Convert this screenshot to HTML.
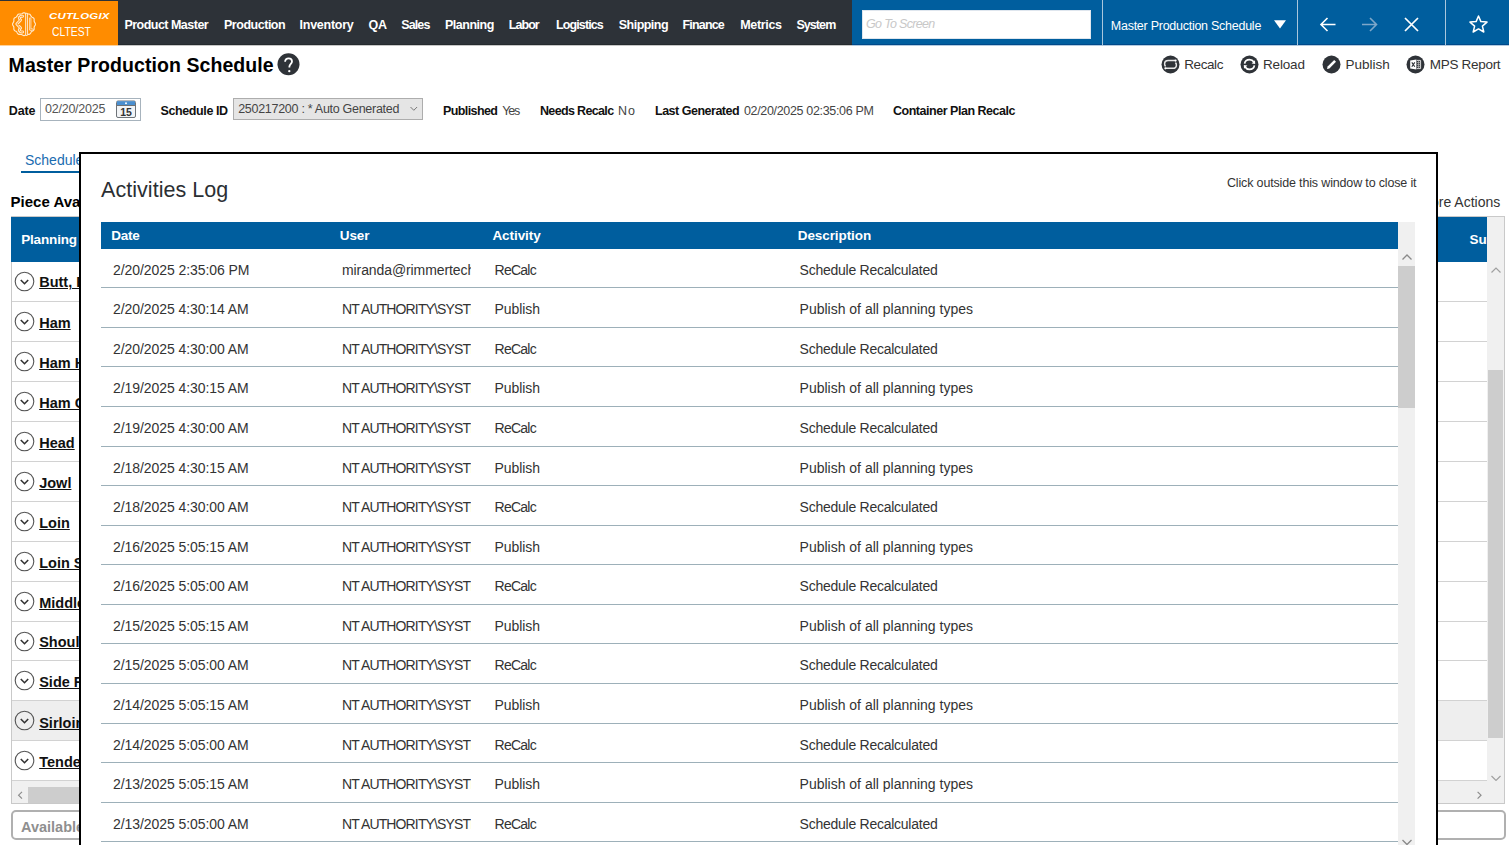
<!DOCTYPE html><html><head><meta charset="utf-8"><style>
html,body{margin:0;padding:0;width:1509px;height:845px;overflow:hidden;background:#fff;font-family:"Liberation Sans",sans-serif}
.t{position:absolute;white-space:nowrap;line-height:1}
.abs{position:absolute}
</style></head><body>
<div style="position:absolute;left:0px;top:0px;width:1509px;height:45px;background:#2d3238"></div>
<div style="position:absolute;left:852px;top:0px;width:657px;height:45px;background:#005e9e"></div>
<div style="position:absolute;left:0px;top:44px;width:852px;height:1px;background:#252a2e"></div>
<div style="position:absolute;left:852px;top:44px;width:657px;height:1px;background:#00498a"></div>
<div style="position:absolute;left:118px;top:45px;width:734px;height:1px;background:rgba(0,0,0,0.22)"></div>
<div style="position:absolute;left:0px;top:1px;width:118px;height:44px;background:#ff8c00"></div>
<div style="position:absolute;left:0px;top:45px;width:118px;height:1px;background:rgba(255,140,0,0.4)"></div>
<div style="position:absolute;left:852px;top:45px;width:657px;height:1px;background:rgba(0,80,150,0.3)"></div>
<div class="t" style="left:124.40px;top:19.30px;font-size:12.5px;letter-spacing:-0.515px;font-weight:700;color:#ffffff;">Product Master</div>
<div class="t" style="left:224.00px;top:19.30px;font-size:12.5px;letter-spacing:-0.478px;font-weight:700;color:#ffffff;">Production</div>
<div class="t" style="left:299.60px;top:19.30px;font-size:12.5px;letter-spacing:-0.262px;font-weight:700;color:#ffffff;">Inventory</div>
<div class="t" style="left:368.40px;top:19.30px;font-size:12.5px;letter-spacing:-0.100px;font-weight:700;color:#ffffff;">QA</div>
<div class="t" style="left:401.20px;top:19.30px;font-size:12.5px;letter-spacing:-0.875px;font-weight:700;color:#ffffff;">Sales</div>
<div class="t" style="left:445.00px;top:19.30px;font-size:12.5px;letter-spacing:-0.486px;font-weight:700;color:#ffffff;">Planning</div>
<div class="t" style="left:508.80px;top:19.30px;font-size:12.5px;letter-spacing:-0.950px;font-weight:700;color:#ffffff;">Labor</div>
<div class="t" style="left:556.00px;top:19.30px;font-size:12.5px;letter-spacing:-0.888px;font-weight:700;color:#ffffff;">Logistics</div>
<div class="t" style="left:618.80px;top:19.30px;font-size:12.5px;letter-spacing:-0.529px;font-weight:700;color:#ffffff;">Shipping</div>
<div class="t" style="left:682.40px;top:19.30px;font-size:12.5px;letter-spacing:-0.800px;font-weight:700;color:#ffffff;">Finance</div>
<div class="t" style="left:740.20px;top:19.30px;font-size:12.5px;letter-spacing:-0.317px;font-weight:700;color:#ffffff;">Metrics</div>
<div class="t" style="left:796.40px;top:19.30px;font-size:12.5px;letter-spacing:-0.920px;font-weight:700;color:#ffffff;">System</div>
<svg class="abs" style="left:0;top:0" width="48" height="48" viewBox="0 0 48 48" fill="none" stroke-linejoin="round" stroke-linecap="round">
<path d="M24.00 12.75 L24.74 12.91 L25.44 13.29 L26.08 13.72 L26.73 14.01 L27.43 14.09 L28.21 14.04 L29.01 14.05 L29.72 14.28 L30.29 14.79 L30.70 15.47 L31.04 16.17 L31.46 16.74 L32.03 17.16 L32.73 17.50 L33.41 17.91 L33.92 18.47 L34.15 19.19 L34.16 19.99 L34.11 20.77 L34.19 21.47 L34.48 22.12 L34.91 22.76 L35.29 23.46 L35.45 24.20 L35.29 24.94 L34.91 25.64 L34.48 26.28 L34.19 26.93 L34.11 27.63 L34.16 28.41 L34.15 29.21 L33.92 29.92 L33.41 30.49 L32.73 30.90 L32.03 31.24 L31.46 31.66 L31.04 32.23 L30.70 32.93 L30.29 33.61 L29.72 34.12 L29.01 34.35 L28.21 34.36 L27.43 34.31 L26.73 34.39 L26.08 34.68 L25.44 35.11 L24.74 35.49 L24.00 35.65 L23.26 35.49 L22.56 35.11 L21.92 34.68 L21.27 34.39 L20.57 34.31 L19.79 34.36 L18.99 34.35 L18.28 34.12 L17.71 33.61 L17.30 32.93 L16.96 32.23 L16.54 31.66 L15.97 31.24 L15.27 30.90 L14.59 30.49 L14.08 29.93 L13.85 29.21 L13.84 28.41 L13.89 27.63 L13.81 26.93 L13.52 26.28 L13.09 25.64 L12.71 24.94 L12.55 24.20 L12.71 23.46 L13.09 22.76 L13.52 22.12 L13.81 21.47 L13.89 20.77 L13.84 19.99 L13.85 19.19 L14.08 18.47 L14.59 17.91 L15.27 17.50 L15.97 17.16 L16.54 16.74 L16.96 16.17 L17.30 15.47 L17.71 14.79 L18.27 14.28 L18.99 14.05 L19.79 14.04 L20.57 14.09 L21.27 14.01 L21.92 13.72 L22.56 13.29 L23.26 12.91 Z" stroke="#ffe9cc" stroke-width="1.15"/>
<g stroke="#ffe9cc" stroke-width="2.9"><path d="M22.6 16.2 C19.4 16 18.2 18 20.6 19.9 L16.8 24 L20.6 28.1 C18.2 30 19.4 32.2 22.6 32"/><path d="M26.6 14.2 L26.6 34.6"/><path d="M30.2 18.6 L30.2 29.6 L32.4 29.6" stroke-width="2.3"/></g>
<g stroke="#ff8c00" stroke-width="0.9"><path d="M22.6 16.2 C19.4 16 18.2 18 20.6 19.9 L16.8 24 L20.6 28.1 C18.2 30 19.4 32.2 22.6 32"/><path d="M26.6 14.2 L26.6 34.6"/><path d="M30.2 18.6 L30.2 29.6 L32.4 29.6" stroke-width="0.7"/></g>
</svg>
<div class="t" style="left:49px;top:11.9px;font-size:8.8px;font-weight:700;font-style:italic;color:#fff;letter-spacing:0.2px;transform:scaleX(1.29);transform-origin:0 0">CUTLOGIX</div>
<div class="t" style="left:52px;top:26.2px;font-size:12.6px;color:#fff;transform:scaleX(0.82);transform-origin:0 0">CLTEST</div>
<div style="position:absolute;left:862px;top:10px;width:229px;height:29px;background:#fff;box-sizing:border-box;border:1px solid #dfe6ee"></div>
<div class="t" style="left:866.00px;top:17.70px;font-size:12.5px;letter-spacing:-0.673px;font-style:italic;color:#c8c8c8;">Go To Screen</div>
<div style="position:absolute;left:1102px;top:0px;width:1px;height:45px;background:#a9c6dc"></div>
<div style="position:absolute;left:1297px;top:0px;width:1px;height:45px;background:#a9c6dc"></div>
<div style="position:absolute;left:1445px;top:0px;width:1px;height:45px;background:#a9c6dc"></div>
<div class="t" style="left:1110.80px;top:19.50px;font-size:12.5px;letter-spacing:-0.260px;font-weight:400;color:#ffffff;">Master Production Schedule</div>
<svg class="abs" style="left:1273px;top:19px" width="14" height="11"><path d="M1 1.2 H13 L7 9.6 Z" fill="#fff"/></svg>
<svg class="abs" style="left:1318px;top:15px" width="20" height="19" fill="none" stroke="#fff" stroke-width="1.6"><path d="M3 9.5 H17.5 M9.5 3 L3 9.5 L9.5 16"/></svg>
<svg class="abs" style="left:1360px;top:15px" width="20" height="19" fill="none" stroke="#7ea7c9" stroke-width="1.6"><path d="M2 9.5 H16.5 M10 3 L16.5 9.5 L10 16"/></svg>
<svg class="abs" style="left:1403px;top:16px" width="17" height="17" fill="none" stroke="#fff" stroke-width="1.7"><path d="M2 2 L15 15 M15 2 L2 15"/></svg>
<svg class="abs" style="left:1468px;top:14px" width="21" height="20" fill="none" stroke="#fff" stroke-width="1.5" stroke-linejoin="round"><path d="M10.5 2 L12.9 7.6 L19 8.1 L14.4 12.1 L15.8 18 L10.5 14.9 L5.2 18 L6.6 12.1 L2 8.1 L8.1 7.6 Z"/></svg>
<div class="t" style="left:8.60px;top:56.30px;font-size:19.5px;letter-spacing:0.068px;font-weight:700;color:#000000;">Master Production Schedule</div>
<svg class="abs" style="left:277px;top:53px" width="23" height="23"><circle cx="11.5" cy="11.3" r="11" fill="#2f3338"/><path d="M8.1 8.8 C8.1 6.6 9.6 5.4 11.6 5.4 C13.6 5.4 15 6.6 15 8.4 C15 10.6 12.4 11 12.4 13.6 L12.4 14.6" fill="none" stroke="#fff" stroke-width="1.8"/><circle cx="12.3" cy="18.2" r="1.15" fill="#fff"/></svg>
<svg class="abs" style="left:1161px;top:55px" width="19" height="19"><circle cx="9.5" cy="9.5" r="9" fill="#2f3338"/><path d="M14.5 5.6 H7.2 C4.8 5.6 3.6 7 3.6 9 C3.6 9.9 4 10.8 4.6 11.3 M4.5 13.3 H11.8 C14.2 13.3 15.4 11.9 15.4 9.9 C15.4 9 15 8.2 14.4 7.6" fill="none" stroke="#e6e6e6" stroke-width="1.5"/><circle cx="14.6" cy="5.6" r="1.1" fill="#fff"/><circle cx="4.4" cy="13.3" r="1.1" fill="#fff"/></svg>
<svg class="abs" style="left:1240px;top:55px" width="19" height="19"><circle cx="9.5" cy="9.5" r="9" fill="#2f3338"/><path d="M4.6 8.6 C5 6.1 7 4.6 9.5 4.6 C11.4 4.6 13 5.6 13.8 7 M14.4 10.4 C14 12.9 12 14.4 9.5 14.4 C7.6 14.4 6 13.4 5.2 12" fill="none" stroke="#fff" stroke-width="1.7"/><path d="M15 5.2 L15.2 9 L11.6 8.4 Z M4 13.8 L3.8 10 L7.4 10.6 Z" fill="#fff"/></svg>
<svg class="abs" style="left:1322px;top:55px" width="19" height="19"><circle cx="9.5" cy="9.5" r="9" fill="#2f3338"/><path d="M5 14 L5.6 11.6 L12.2 5 L14 6.8 L7.4 13.4 Z" fill="#fff"/></svg>
<svg class="abs" style="left:1406px;top:55px" width="19" height="19"><circle cx="9.5" cy="9.5" r="9" fill="#2f3338"/><path d="M4.2 5.6 L10.4 4.6 L10.4 14.4 L4.2 13.4 Z" fill="#fff"/><path d="M10.8 5.4 H14.6 V13.6 H10.8" fill="none" stroke="#ddd" stroke-width="1"/><path d="M11 7.6 H14.4 M11 9.6 H14.4 M11 11.6 H14.4 M12.6 5.6 V13.4" stroke="#bbb" stroke-width="0.7"/><path d="M5.8 7.4 L8.8 11.8 M8.8 7.4 L5.8 11.8" stroke="#2f3338" stroke-width="1.1"/></svg>
<div class="t" style="left:1184.20px;top:57.70px;font-size:13.5px;letter-spacing:-0.400px;font-weight:400;color:#333333;">Recalc</div>
<div class="t" style="left:1263.00px;top:57.70px;font-size:13.5px;letter-spacing:-0.160px;font-weight:400;color:#333333;">Reload</div>
<div class="t" style="left:1345.60px;top:57.70px;font-size:13.5px;letter-spacing:0.000px;font-weight:400;color:#333333;">Publish</div>
<div class="t" style="left:1429.80px;top:57.70px;font-size:13.5px;letter-spacing:-0.300px;font-weight:400;color:#333333;">MPS Report</div>
<div class="t" style="left:8.80px;top:104.50px;font-size:12.5px;letter-spacing:-0.167px;font-weight:700;color:#111111;">Date</div>
<div class="t" style="left:160.60px;top:104.50px;font-size:12.5px;letter-spacing:-0.400px;font-weight:700;color:#111111;">Schedule ID</div>
<div class="t" style="left:443.00px;top:104.90px;font-size:12.5px;letter-spacing:-0.600px;font-weight:700;color:#111111;">Published</div>
<div class="t" style="left:502.20px;top:104.90px;font-size:12.5px;letter-spacing:-1.150px;font-weight:400;color:#444444;">Yes</div>
<div class="t" style="left:540.00px;top:104.90px;font-size:12.5px;letter-spacing:-0.655px;font-weight:700;color:#111111;">Needs Recalc</div>
<div class="t" style="left:618.00px;top:104.90px;font-size:12.5px;letter-spacing:0.900px;font-weight:400;color:#444444;">No</div>
<div class="t" style="left:655.00px;top:104.90px;font-size:12.5px;letter-spacing:-0.492px;font-weight:700;color:#111111;">Last Generated</div>
<div class="t" style="left:744.00px;top:104.90px;font-size:12.5px;letter-spacing:-0.338px;font-weight:400;color:#444444;">02/20/2025 02:35:06 PM</div>
<div class="t" style="left:893.00px;top:104.90px;font-size:12.5px;letter-spacing:-0.475px;font-weight:700;color:#111111;">Container Plan Recalc</div>
<div style="position:absolute;left:40px;top:98px;width:101px;height:23px;box-sizing:border-box;border:1px solid #a7b3bd;background:#fff"></div>
<div class="t" style="left:45.00px;top:103.10px;font-size:12.5px;letter-spacing:-0.233px;font-weight:400;color:#555555;">02/20/2025</div>
<svg class="abs" style="left:116px;top:100px" width="20" height="18"><rect x="0.5" y="1" width="19" height="16.5" rx="1.5" fill="#f2f4f6" stroke="#6e7378"/><rect x="1" y="1.2" width="18" height="4" fill="#4a8fd0"/><rect x="1" y="5" width="18" height="0.8" fill="#555"/><circle cx="10" cy="3.2" r="1" fill="#fff"/><text x="10" y="16" font-family="Liberation Sans" font-weight="700" font-size="10.5" text-anchor="middle" fill="#333">15</text></svg>
<div style="position:absolute;left:233px;top:98px;width:190px;height:22px;box-sizing:border-box;border:1px solid #adadad;background:#e5e5e5"></div>
<div class="t" style="left:238.20px;top:103.30px;font-size:12.5px;letter-spacing:-0.285px;font-weight:400;color:#444444;">250217200 : * Auto Generated</div>
<svg class="abs" style="left:409px;top:105px" width="10" height="8" fill="none" stroke="#777" stroke-width="1"><path d="M1.5 2 L4.8 5.3 L8.1 2"/></svg>
<div style="position:absolute;left:0px;top:45px;width:1509px;height:0px;"></div>
<div class="t" style="left:25.00px;top:152.50px;font-size:14px;letter-spacing:0.000px;font-weight:400;color:#1a6cb0;">Schedule</div>
<div style="position:absolute;left:21px;top:171px;width:70px;height:2px;background:#005e9e"></div>
<div class="t" style="left:10.60px;top:194.30px;font-size:15px;letter-spacing:0.000px;font-weight:700;color:#000000;">Piece Availability</div>
<div class="t" style="left:1419.30px;top:194.80px;font-size:14px;letter-spacing:0.000px;font-weight:400;color:#333333;">More Actions</div>
<div style="position:absolute;left:11px;top:216px;width:1494px;height:588px;box-sizing:border-box;border:1px solid #c9c9c9;background:#fff"></div>
<div style="position:absolute;left:11px;top:217px;width:1476px;height:45px;background:#005e9e"></div>
<div class="t" style="left:21.20px;top:233.10px;font-size:13.5px;letter-spacing:-0.160px;font-weight:700;color:#ffffff;">Planning Type</div>
<div class="t" style="left:1469.60px;top:232.90px;font-size:13.5px;letter-spacing:-0.160px;font-weight:700;color:#ffffff;">Sun</div>
<div class="abs" style="left:12px;top:301.30px;width:1475px;height:1px;background:#d2d2d2"></div>
<svg class="abs" style="left:14px;top:271.45px" width="21" height="21"><circle cx="10.5" cy="10.5" r="9.3" fill="none" stroke="#555" stroke-width="1.1"/><path d="M6.8 9 L10.5 12.7 L14.2 9" fill="none" stroke="#333" stroke-width="1.6"/></svg>
<div class="t" style="left:39.20px;top:274.90px;font-size:14.5px;letter-spacing:0.000px;font-weight:700;color:#111111;text-decoration:underline;text-underline-offset:1px;">Butt, Boston</div>
<div class="abs" style="left:12px;top:341.20px;width:1475px;height:1px;background:#d2d2d2"></div>
<svg class="abs" style="left:14px;top:311.35px" width="21" height="21"><circle cx="10.5" cy="10.5" r="9.3" fill="none" stroke="#555" stroke-width="1.1"/><path d="M6.8 9 L10.5 12.7 L14.2 9" fill="none" stroke="#333" stroke-width="1.6"/></svg>
<div class="t" style="left:39.20px;top:315.50px;font-size:14.5px;letter-spacing:0.000px;font-weight:700;color:#111111;text-decoration:underline;text-underline-offset:1px;">Ham</div>
<div class="abs" style="left:12px;top:381.10px;width:1475px;height:1px;background:#d2d2d2"></div>
<svg class="abs" style="left:14px;top:351.25px" width="21" height="21"><circle cx="10.5" cy="10.5" r="9.3" fill="none" stroke="#555" stroke-width="1.1"/><path d="M6.8 9 L10.5 12.7 L14.2 9" fill="none" stroke="#333" stroke-width="1.6"/></svg>
<div class="t" style="left:39.20px;top:356.10px;font-size:14.5px;letter-spacing:0.000px;font-weight:700;color:#111111;text-decoration:underline;text-underline-offset:1px;">Ham Hock</div>
<div class="abs" style="left:12px;top:421.00px;width:1475px;height:1px;background:#d2d2d2"></div>
<svg class="abs" style="left:14px;top:391.15px" width="21" height="21"><circle cx="10.5" cy="10.5" r="9.3" fill="none" stroke="#555" stroke-width="1.1"/><path d="M6.8 9 L10.5 12.7 L14.2 9" fill="none" stroke="#333" stroke-width="1.6"/></svg>
<div class="t" style="left:39.20px;top:395.70px;font-size:14.5px;letter-spacing:0.000px;font-weight:700;color:#111111;text-decoration:underline;text-underline-offset:1px;">Ham Cured</div>
<div class="abs" style="left:12px;top:460.90px;width:1475px;height:1px;background:#d2d2d2"></div>
<svg class="abs" style="left:14px;top:431.05px" width="21" height="21"><circle cx="10.5" cy="10.5" r="9.3" fill="none" stroke="#555" stroke-width="1.1"/><path d="M6.8 9 L10.5 12.7 L14.2 9" fill="none" stroke="#333" stroke-width="1.6"/></svg>
<div class="t" style="left:39.20px;top:436.30px;font-size:14.5px;letter-spacing:0.000px;font-weight:700;color:#111111;text-decoration:underline;text-underline-offset:1px;">Head</div>
<div class="abs" style="left:12px;top:500.80px;width:1475px;height:1px;background:#d2d2d2"></div>
<svg class="abs" style="left:14px;top:470.95px" width="21" height="21"><circle cx="10.5" cy="10.5" r="9.3" fill="none" stroke="#555" stroke-width="1.1"/><path d="M6.8 9 L10.5 12.7 L14.2 9" fill="none" stroke="#333" stroke-width="1.6"/></svg>
<div class="t" style="left:39.20px;top:475.90px;font-size:14.5px;letter-spacing:0.000px;font-weight:700;color:#111111;text-decoration:underline;text-underline-offset:1px;">Jowl</div>
<div class="abs" style="left:12px;top:540.70px;width:1475px;height:1px;background:#d2d2d2"></div>
<svg class="abs" style="left:14px;top:510.85px" width="21" height="21"><circle cx="10.5" cy="10.5" r="9.3" fill="none" stroke="#555" stroke-width="1.1"/><path d="M6.8 9 L10.5 12.7 L14.2 9" fill="none" stroke="#333" stroke-width="1.6"/></svg>
<div class="t" style="left:39.20px;top:515.50px;font-size:14.5px;letter-spacing:0.000px;font-weight:700;color:#111111;text-decoration:underline;text-underline-offset:1px;">Loin</div>
<div class="abs" style="left:12px;top:580.60px;width:1475px;height:1px;background:#d2d2d2"></div>
<svg class="abs" style="left:14px;top:550.75px" width="21" height="21"><circle cx="10.5" cy="10.5" r="9.3" fill="none" stroke="#555" stroke-width="1.1"/><path d="M6.8 9 L10.5 12.7 L14.2 9" fill="none" stroke="#333" stroke-width="1.6"/></svg>
<div class="t" style="left:39.20px;top:556.10px;font-size:14.5px;letter-spacing:0.000px;font-weight:700;color:#111111;text-decoration:underline;text-underline-offset:1px;">Loin Sirloin</div>
<div class="abs" style="left:12px;top:620.50px;width:1475px;height:1px;background:#d2d2d2"></div>
<svg class="abs" style="left:14px;top:590.65px" width="21" height="21"><circle cx="10.5" cy="10.5" r="9.3" fill="none" stroke="#555" stroke-width="1.1"/><path d="M6.8 9 L10.5 12.7 L14.2 9" fill="none" stroke="#333" stroke-width="1.6"/></svg>
<div class="t" style="left:39.20px;top:595.70px;font-size:14.5px;letter-spacing:0.000px;font-weight:700;color:#111111;text-decoration:underline;text-underline-offset:1px;">Middle</div>
<div class="abs" style="left:12px;top:660.40px;width:1475px;height:1px;background:#d2d2d2"></div>
<svg class="abs" style="left:14px;top:630.55px" width="21" height="21"><circle cx="10.5" cy="10.5" r="9.3" fill="none" stroke="#555" stroke-width="1.1"/><path d="M6.8 9 L10.5 12.7 L14.2 9" fill="none" stroke="#333" stroke-width="1.6"/></svg>
<div class="t" style="left:39.20px;top:635.30px;font-size:14.5px;letter-spacing:0.000px;font-weight:700;color:#111111;text-decoration:underline;text-underline-offset:1px;">Shoulder</div>
<div class="abs" style="left:12px;top:700.30px;width:1475px;height:1px;background:#d2d2d2"></div>
<svg class="abs" style="left:14px;top:670.45px" width="21" height="21"><circle cx="10.5" cy="10.5" r="9.3" fill="none" stroke="#555" stroke-width="1.1"/><path d="M6.8 9 L10.5 12.7 L14.2 9" fill="none" stroke="#333" stroke-width="1.6"/></svg>
<div class="t" style="left:39.20px;top:674.90px;font-size:14.5px;letter-spacing:0.000px;font-weight:700;color:#111111;text-decoration:underline;text-underline-offset:1px;">Side Rib</div>
<div class="abs" style="left:12px;top:700.90px;width:1475px;height:39.9px;background:#eeeeee"></div>
<div class="abs" style="left:12px;top:740.20px;width:1475px;height:1px;background:#d2d2d2"></div>
<svg class="abs" style="left:14px;top:710.35px" width="21" height="21"><circle cx="10.5" cy="10.5" r="9.3" fill="none" stroke="#555" stroke-width="1.1"/><path d="M6.8 9 L10.5 12.7 L14.2 9" fill="none" stroke="#333" stroke-width="1.6"/></svg>
<div class="t" style="left:39.20px;top:715.50px;font-size:14.5px;letter-spacing:0.000px;font-weight:700;color:#111111;text-decoration:underline;text-underline-offset:1px;">Sirloin</div>
<div class="abs" style="left:12px;top:780.10px;width:1475px;height:1px;background:#d2d2d2"></div>
<svg class="abs" style="left:14px;top:750.25px" width="21" height="21"><circle cx="10.5" cy="10.5" r="9.3" fill="none" stroke="#555" stroke-width="1.1"/><path d="M6.8 9 L10.5 12.7 L14.2 9" fill="none" stroke="#333" stroke-width="1.6"/></svg>
<div class="t" style="left:39.20px;top:755.10px;font-size:14.5px;letter-spacing:0.000px;font-weight:700;color:#111111;text-decoration:underline;text-underline-offset:1px;">Tenderloin</div>
<div style="position:absolute;left:1487px;top:217px;width:17px;height:564px;background:#f0f0f0"></div>
<div style="position:absolute;left:1488px;top:370px;width:15px;height:368px;background:#cdcdcd"></div>
<svg class="abs" style="left:1490px;top:266px" width="12" height="9" fill="none" stroke="#a0a0a0" stroke-width="1.2"><path d="M1.5 6.5 L6 2 L10.5 6.5"/></svg>
<svg class="abs" style="left:1490px;top:774px" width="12" height="9" fill="none" stroke="#a0a0a0" stroke-width="1.2"><path d="M1.5 2 L6 6.5 L10.5 2"/></svg>
<div style="position:absolute;left:12px;top:781px;width:1492px;height:22px;background:#f0f0f0"></div>
<div style="position:absolute;left:28px;top:787px;width:1200px;height:16px;background:#cdcdcd"></div>
<svg class="abs" style="left:16px;top:790px" width="9" height="11" fill="none" stroke="#8c8c8c" stroke-width="1.2"><path d="M6 1.8 L2.6 5.2 L6 8.6"/></svg>
<svg class="abs" style="left:1475px;top:790px" width="9" height="11" fill="none" stroke="#8c8c8c" stroke-width="1.2"><path d="M2.6 1.8 L6 5.2 L2.6 8.6"/></svg>
<div style="position:absolute;left:10.5px;top:810px;width:1495px;height:30px;box-sizing:border-box;border:2px solid #b0b0b0;border-radius:5px;background:#fff"></div>
<div class="t" style="left:21.00px;top:819.90px;font-size:14.5px;letter-spacing:0.000px;font-weight:700;color:#8f8f8f;">Available</div>
<div class="abs" style="left:79px;top:152px;width:1359px;height:700px;box-sizing:border-box;border:2px solid #000;background:#fff"></div>
<div class="t" style="left:101.00px;top:180.30px;font-size:21.5px;letter-spacing:0.046px;font-weight:400;color:#2b2f33;">Activities Log</div>
<div class="t" style="left:1227.00px;top:176.70px;font-size:12.5px;letter-spacing:-0.158px;font-weight:400;color:#333333;">Click outside this window to close it</div>
<div style="position:absolute;left:101px;top:222px;width:1297px;height:27px;background:#005e9e"></div>
<div class="t" style="left:111.20px;top:228.90px;font-size:13.5px;letter-spacing:-0.200px;font-weight:700;color:#ffffff;">Date</div>
<div class="t" style="left:339.80px;top:228.90px;font-size:13.5px;letter-spacing:-0.133px;font-weight:700;color:#ffffff;">User</div>
<div class="t" style="left:492.40px;top:228.90px;font-size:13.5px;letter-spacing:-0.057px;font-weight:700;color:#ffffff;">Activity</div>
<div class="t" style="left:797.80px;top:228.90px;font-size:13.5px;letter-spacing:-0.090px;font-weight:700;color:#ffffff;">Description</div>
<div class="abs" style="left:101px;top:287px;width:1297px;height:1px;background:#9db0b9"></div>
<div class="t" style="left:113.00px;top:263.40px;font-size:14px;letter-spacing:-0.074px;font-weight:400;color:#333333;">2/20/2025 2:35:06 PM</div>
<div class="abs" style="left:0;top:0;width:471px;height:845px;overflow:hidden"><div class="t" style="left:342.00px;top:263.40px;font-size:14px;letter-spacing:-0.094px;font-weight:400;color:#333333;">miranda@rimmertech.com</div></div>
<div class="t" style="left:494.60px;top:263.40px;font-size:14px;letter-spacing:-0.760px;font-weight:400;color:#333333;">ReCalc</div>
<div class="t" style="left:799.60px;top:263.40px;font-size:14px;letter-spacing:-0.255px;font-weight:400;color:#333333;">Schedule Recalculated</div>
<div class="abs" style="left:101px;top:327px;width:1297px;height:1px;background:#9db0b9"></div>
<div class="t" style="left:113.00px;top:301.79px;font-size:14px;letter-spacing:-0.074px;font-weight:400;color:#333333;">2/20/2025 4:30:14 AM</div>
<div class="abs" style="left:0;top:0;width:471px;height:845px;overflow:hidden"><div class="t" style="left:342.00px;top:301.79px;font-size:14px;letter-spacing:-0.863px;font-weight:400;color:#333333;">NT AUTHORITY\SYSTEM</div></div>
<div class="t" style="left:494.60px;top:301.79px;font-size:14px;letter-spacing:-0.093px;font-weight:400;color:#333333;">Publish</div>
<div class="t" style="left:799.60px;top:301.79px;font-size:14px;letter-spacing:-0.007px;font-weight:400;color:#333333;">Publish of all planning types</div>
<div class="abs" style="left:101px;top:366px;width:1297px;height:1px;background:#9db0b9"></div>
<div class="t" style="left:113.00px;top:342.18px;font-size:14px;letter-spacing:-0.074px;font-weight:400;color:#333333;">2/20/2025 4:30:00 AM</div>
<div class="abs" style="left:0;top:0;width:471px;height:845px;overflow:hidden"><div class="t" style="left:342.00px;top:342.18px;font-size:14px;letter-spacing:-0.863px;font-weight:400;color:#333333;">NT AUTHORITY\SYSTEM</div></div>
<div class="t" style="left:494.60px;top:342.18px;font-size:14px;letter-spacing:-0.760px;font-weight:400;color:#333333;">ReCalc</div>
<div class="t" style="left:799.60px;top:342.18px;font-size:14px;letter-spacing:-0.255px;font-weight:400;color:#333333;">Schedule Recalculated</div>
<div class="abs" style="left:101px;top:406px;width:1297px;height:1px;background:#9db0b9"></div>
<div class="t" style="left:113.00px;top:380.57px;font-size:14px;letter-spacing:-0.074px;font-weight:400;color:#333333;">2/19/2025 4:30:15 AM</div>
<div class="abs" style="left:0;top:0;width:471px;height:845px;overflow:hidden"><div class="t" style="left:342.00px;top:380.57px;font-size:14px;letter-spacing:-0.863px;font-weight:400;color:#333333;">NT AUTHORITY\SYSTEM</div></div>
<div class="t" style="left:494.60px;top:380.57px;font-size:14px;letter-spacing:-0.093px;font-weight:400;color:#333333;">Publish</div>
<div class="t" style="left:799.60px;top:380.57px;font-size:14px;letter-spacing:-0.007px;font-weight:400;color:#333333;">Publish of all planning types</div>
<div class="abs" style="left:101px;top:446px;width:1297px;height:1px;background:#9db0b9"></div>
<div class="t" style="left:113.00px;top:420.96px;font-size:14px;letter-spacing:-0.074px;font-weight:400;color:#333333;">2/19/2025 4:30:00 AM</div>
<div class="abs" style="left:0;top:0;width:471px;height:845px;overflow:hidden"><div class="t" style="left:342.00px;top:420.96px;font-size:14px;letter-spacing:-0.863px;font-weight:400;color:#333333;">NT AUTHORITY\SYSTEM</div></div>
<div class="t" style="left:494.60px;top:420.96px;font-size:14px;letter-spacing:-0.760px;font-weight:400;color:#333333;">ReCalc</div>
<div class="t" style="left:799.60px;top:420.96px;font-size:14px;letter-spacing:-0.255px;font-weight:400;color:#333333;">Schedule Recalculated</div>
<div class="abs" style="left:101px;top:485px;width:1297px;height:1px;background:#9db0b9"></div>
<div class="t" style="left:113.00px;top:461.35px;font-size:14px;letter-spacing:-0.074px;font-weight:400;color:#333333;">2/18/2025 4:30:15 AM</div>
<div class="abs" style="left:0;top:0;width:471px;height:845px;overflow:hidden"><div class="t" style="left:342.00px;top:461.35px;font-size:14px;letter-spacing:-0.863px;font-weight:400;color:#333333;">NT AUTHORITY\SYSTEM</div></div>
<div class="t" style="left:494.60px;top:461.35px;font-size:14px;letter-spacing:-0.093px;font-weight:400;color:#333333;">Publish</div>
<div class="t" style="left:799.60px;top:461.35px;font-size:14px;letter-spacing:-0.007px;font-weight:400;color:#333333;">Publish of all planning types</div>
<div class="abs" style="left:101px;top:525px;width:1297px;height:1px;background:#9db0b9"></div>
<div class="t" style="left:113.00px;top:499.74px;font-size:14px;letter-spacing:-0.074px;font-weight:400;color:#333333;">2/18/2025 4:30:00 AM</div>
<div class="abs" style="left:0;top:0;width:471px;height:845px;overflow:hidden"><div class="t" style="left:342.00px;top:499.74px;font-size:14px;letter-spacing:-0.863px;font-weight:400;color:#333333;">NT AUTHORITY\SYSTEM</div></div>
<div class="t" style="left:494.60px;top:499.74px;font-size:14px;letter-spacing:-0.760px;font-weight:400;color:#333333;">ReCalc</div>
<div class="t" style="left:799.60px;top:499.74px;font-size:14px;letter-spacing:-0.255px;font-weight:400;color:#333333;">Schedule Recalculated</div>
<div class="abs" style="left:101px;top:564px;width:1297px;height:1px;background:#9db0b9"></div>
<div class="t" style="left:113.00px;top:540.13px;font-size:14px;letter-spacing:-0.074px;font-weight:400;color:#333333;">2/16/2025 5:05:15 AM</div>
<div class="abs" style="left:0;top:0;width:471px;height:845px;overflow:hidden"><div class="t" style="left:342.00px;top:540.13px;font-size:14px;letter-spacing:-0.863px;font-weight:400;color:#333333;">NT AUTHORITY\SYSTEM</div></div>
<div class="t" style="left:494.60px;top:540.13px;font-size:14px;letter-spacing:-0.093px;font-weight:400;color:#333333;">Publish</div>
<div class="t" style="left:799.60px;top:540.13px;font-size:14px;letter-spacing:-0.007px;font-weight:400;color:#333333;">Publish of all planning types</div>
<div class="abs" style="left:101px;top:604px;width:1297px;height:1px;background:#9db0b9"></div>
<div class="t" style="left:113.00px;top:578.52px;font-size:14px;letter-spacing:-0.074px;font-weight:400;color:#333333;">2/16/2025 5:05:00 AM</div>
<div class="abs" style="left:0;top:0;width:471px;height:845px;overflow:hidden"><div class="t" style="left:342.00px;top:578.52px;font-size:14px;letter-spacing:-0.863px;font-weight:400;color:#333333;">NT AUTHORITY\SYSTEM</div></div>
<div class="t" style="left:494.60px;top:578.52px;font-size:14px;letter-spacing:-0.760px;font-weight:400;color:#333333;">ReCalc</div>
<div class="t" style="left:799.60px;top:578.52px;font-size:14px;letter-spacing:-0.255px;font-weight:400;color:#333333;">Schedule Recalculated</div>
<div class="abs" style="left:101px;top:643px;width:1297px;height:1px;background:#9db0b9"></div>
<div class="t" style="left:113.00px;top:618.91px;font-size:14px;letter-spacing:-0.074px;font-weight:400;color:#333333;">2/15/2025 5:05:15 AM</div>
<div class="abs" style="left:0;top:0;width:471px;height:845px;overflow:hidden"><div class="t" style="left:342.00px;top:618.91px;font-size:14px;letter-spacing:-0.863px;font-weight:400;color:#333333;">NT AUTHORITY\SYSTEM</div></div>
<div class="t" style="left:494.60px;top:618.91px;font-size:14px;letter-spacing:-0.093px;font-weight:400;color:#333333;">Publish</div>
<div class="t" style="left:799.60px;top:618.91px;font-size:14px;letter-spacing:-0.007px;font-weight:400;color:#333333;">Publish of all planning types</div>
<div class="abs" style="left:101px;top:683px;width:1297px;height:1px;background:#9db0b9"></div>
<div class="t" style="left:113.00px;top:658.30px;font-size:14px;letter-spacing:-0.074px;font-weight:400;color:#333333;">2/15/2025 5:05:00 AM</div>
<div class="abs" style="left:0;top:0;width:471px;height:845px;overflow:hidden"><div class="t" style="left:342.00px;top:658.30px;font-size:14px;letter-spacing:-0.863px;font-weight:400;color:#333333;">NT AUTHORITY\SYSTEM</div></div>
<div class="t" style="left:494.60px;top:658.30px;font-size:14px;letter-spacing:-0.760px;font-weight:400;color:#333333;">ReCalc</div>
<div class="t" style="left:799.60px;top:658.30px;font-size:14px;letter-spacing:-0.255px;font-weight:400;color:#333333;">Schedule Recalculated</div>
<div class="abs" style="left:101px;top:723px;width:1297px;height:1px;background:#9db0b9"></div>
<div class="t" style="left:113.00px;top:697.69px;font-size:14px;letter-spacing:-0.074px;font-weight:400;color:#333333;">2/14/2025 5:05:15 AM</div>
<div class="abs" style="left:0;top:0;width:471px;height:845px;overflow:hidden"><div class="t" style="left:342.00px;top:697.69px;font-size:14px;letter-spacing:-0.863px;font-weight:400;color:#333333;">NT AUTHORITY\SYSTEM</div></div>
<div class="t" style="left:494.60px;top:697.69px;font-size:14px;letter-spacing:-0.093px;font-weight:400;color:#333333;">Publish</div>
<div class="t" style="left:799.60px;top:697.69px;font-size:14px;letter-spacing:-0.007px;font-weight:400;color:#333333;">Publish of all planning types</div>
<div class="abs" style="left:101px;top:762px;width:1297px;height:1px;background:#9db0b9"></div>
<div class="t" style="left:113.00px;top:738.08px;font-size:14px;letter-spacing:-0.074px;font-weight:400;color:#333333;">2/14/2025 5:05:00 AM</div>
<div class="abs" style="left:0;top:0;width:471px;height:845px;overflow:hidden"><div class="t" style="left:342.00px;top:738.08px;font-size:14px;letter-spacing:-0.863px;font-weight:400;color:#333333;">NT AUTHORITY\SYSTEM</div></div>
<div class="t" style="left:494.60px;top:738.08px;font-size:14px;letter-spacing:-0.760px;font-weight:400;color:#333333;">ReCalc</div>
<div class="t" style="left:799.60px;top:738.08px;font-size:14px;letter-spacing:-0.255px;font-weight:400;color:#333333;">Schedule Recalculated</div>
<div class="abs" style="left:101px;top:802px;width:1297px;height:1px;background:#9db0b9"></div>
<div class="t" style="left:113.00px;top:777.47px;font-size:14px;letter-spacing:-0.074px;font-weight:400;color:#333333;">2/13/2025 5:05:15 AM</div>
<div class="abs" style="left:0;top:0;width:471px;height:845px;overflow:hidden"><div class="t" style="left:342.00px;top:777.47px;font-size:14px;letter-spacing:-0.863px;font-weight:400;color:#333333;">NT AUTHORITY\SYSTEM</div></div>
<div class="t" style="left:494.60px;top:777.47px;font-size:14px;letter-spacing:-0.093px;font-weight:400;color:#333333;">Publish</div>
<div class="t" style="left:799.60px;top:777.47px;font-size:14px;letter-spacing:-0.007px;font-weight:400;color:#333333;">Publish of all planning types</div>
<div class="abs" style="left:101px;top:841px;width:1297px;height:1px;background:#9db0b9"></div>
<div class="t" style="left:113.00px;top:816.86px;font-size:14px;letter-spacing:-0.074px;font-weight:400;color:#333333;">2/13/2025 5:05:00 AM</div>
<div class="abs" style="left:0;top:0;width:471px;height:845px;overflow:hidden"><div class="t" style="left:342.00px;top:816.86px;font-size:14px;letter-spacing:-0.863px;font-weight:400;color:#333333;">NT AUTHORITY\SYSTEM</div></div>
<div class="t" style="left:494.60px;top:816.86px;font-size:14px;letter-spacing:-0.760px;font-weight:400;color:#333333;">ReCalc</div>
<div class="t" style="left:799.60px;top:816.86px;font-size:14px;letter-spacing:-0.255px;font-weight:400;color:#333333;">Schedule Recalculated</div>
<div style="position:absolute;left:1398px;top:222px;width:17px;height:623px;background:#f0f0f0"></div>
<div style="position:absolute;left:1398px;top:266px;width:17px;height:142px;background:#cdcdcd"></div>
<svg class="abs" style="left:1401px;top:253px" width="12" height="9" fill="none" stroke="#8a8a8a" stroke-width="1.3"><path d="M1.5 6.5 L6 2 L10.5 6.5"/></svg>
<svg class="abs" style="left:1401px;top:838px" width="12" height="9" fill="none" stroke="#8a8a8a" stroke-width="1.3"><path d="M1.5 2 L6 6.5 L10.5 2"/></svg>
</body></html>
